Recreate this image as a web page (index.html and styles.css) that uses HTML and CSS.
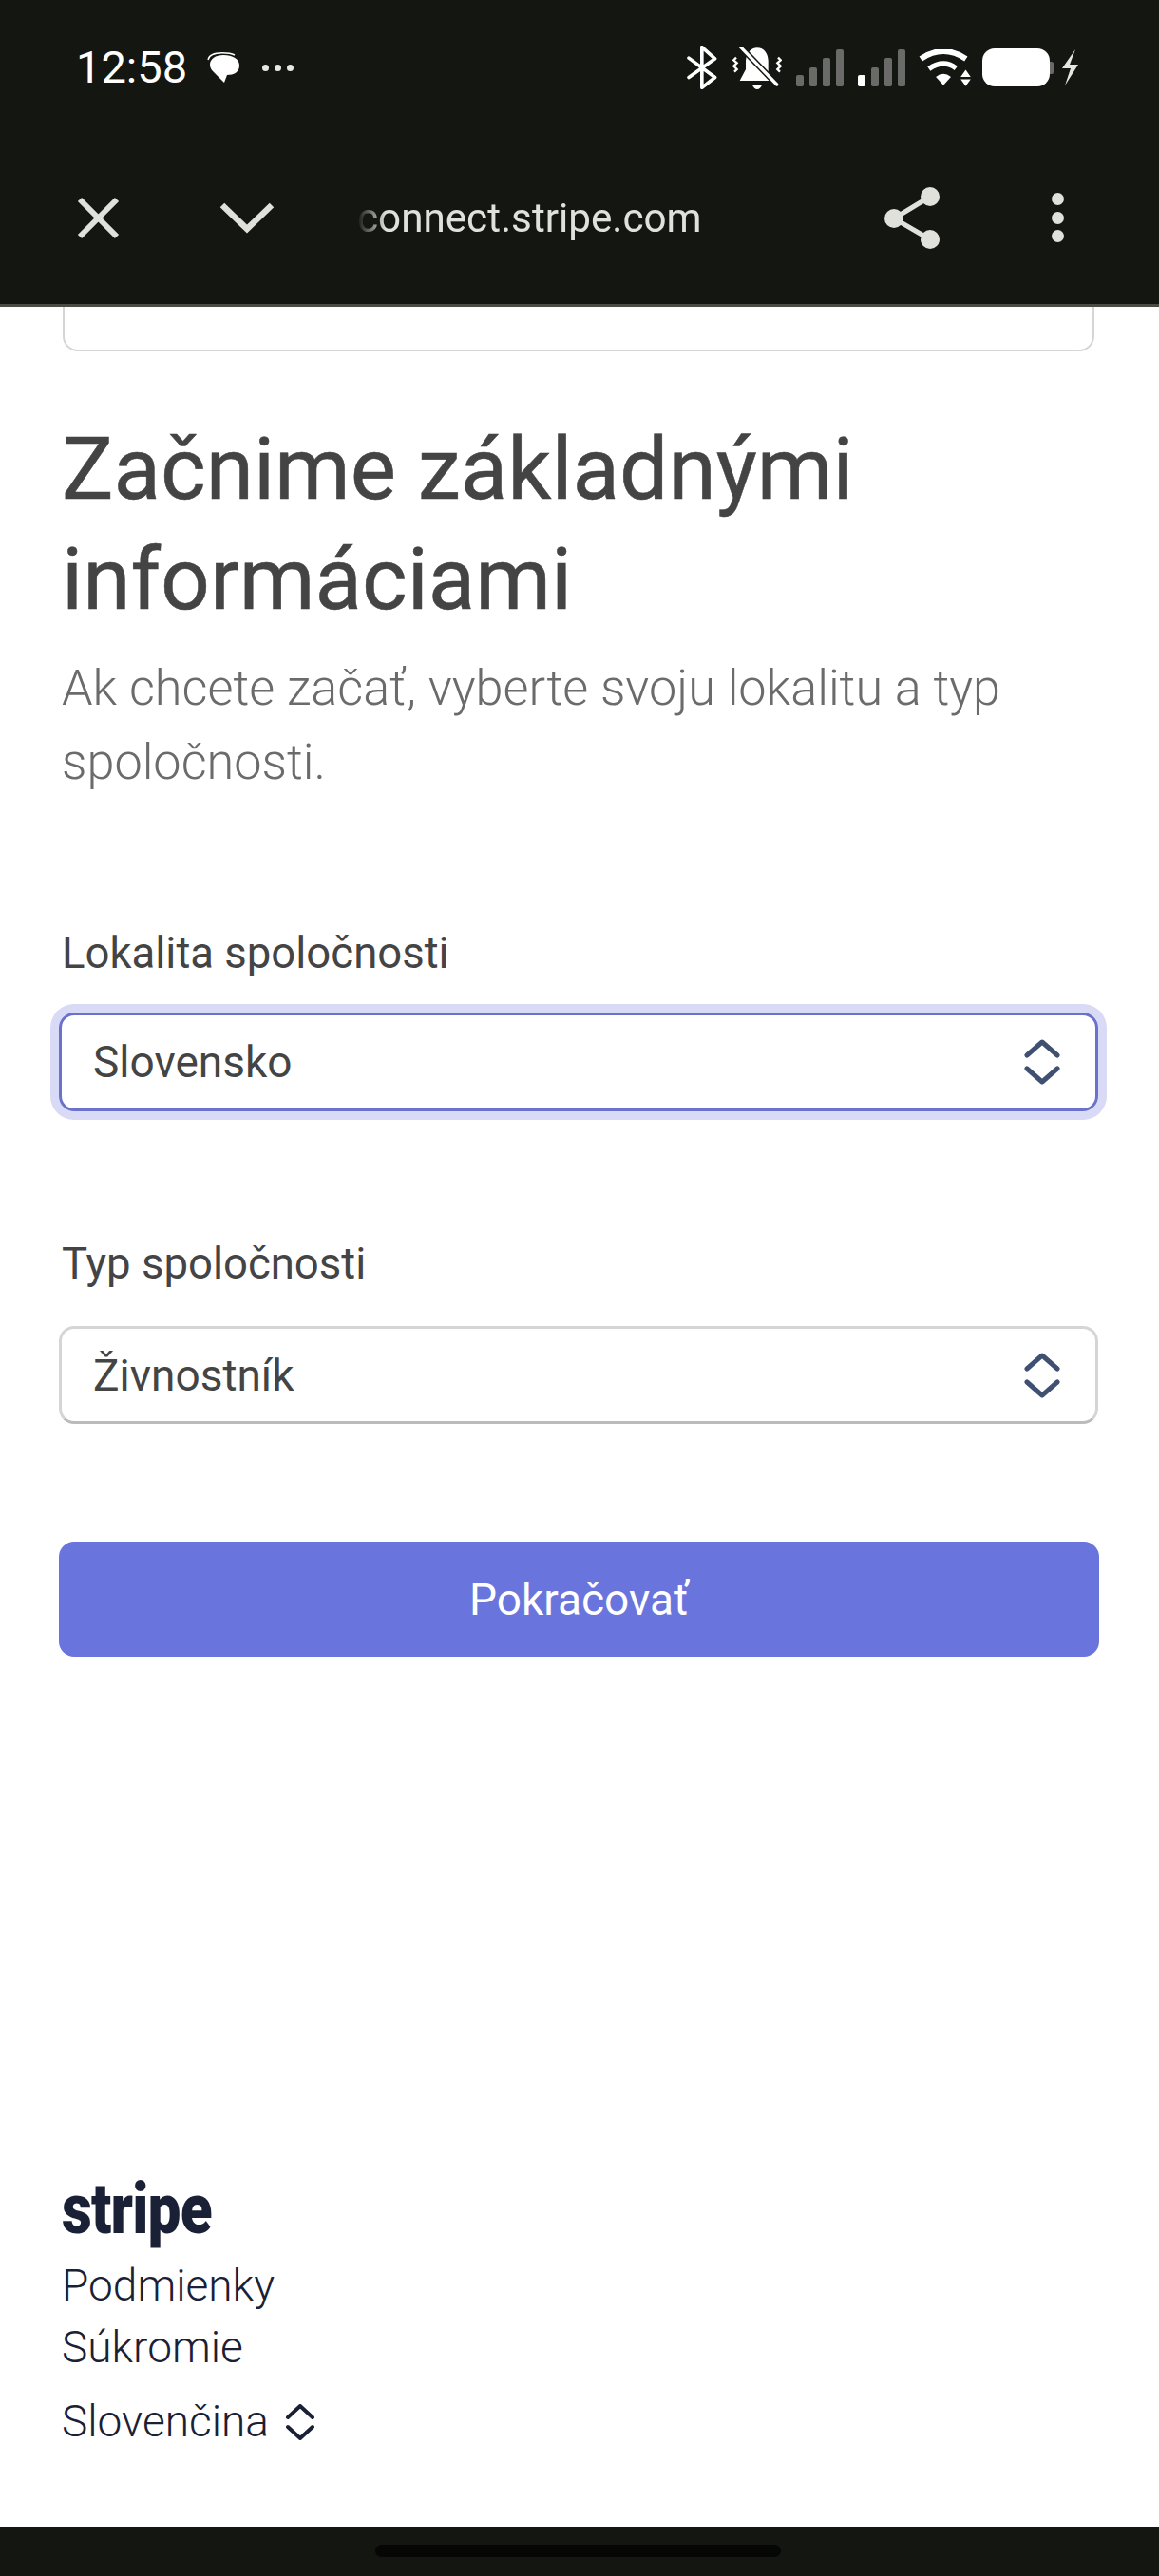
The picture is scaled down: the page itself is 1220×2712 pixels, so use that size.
FILE: index.html
```html
<!DOCTYPE html>
<html lang="sk">

<head>
    <meta charset="UTF-8">
    <meta name="viewport" content="width=device-width, initial-scale=1.0">
    <title>Stripe</title>
    <link rel="stylesheet" href="styles.css">
</head>

<body>
    <!-- telefon: stavovy riadok + lista prehliadaca -->
    <header class="top">
        <div class="status">
            <div class="status-left">
                <span class="time">12:58</span>
                <svg class="ic-chat" viewBox="0 0 34 32">
                    <path d="M1 8 C2 3 8 .8 16 .8 C22 .8 26 1.5 29 3" fill="none" stroke="#fff" stroke-width="1.4" />
                    <path d="M17 3 C27 3 34 7 34 14 C34 21 28 24 21 24 L18 32 L7 21 C4 18 3 16 3 13 C3 7 9 3 17 3 Z" fill="#fff" />
                </svg>
                <div class="dots"><i></i><i></i><i></i></div>
            </div>
            <div class="status-right">
                <svg class="ic-bt" viewBox="0 0 97 140">
                    <path d="M6 40 L90 102 L48 135 L48 5 L90 42 L6 102" fill="none" stroke="#fff" stroke-width="11" stroke-linecap="round" stroke-linejoin="round" />
                </svg>
                <svg class="ic-bell" viewBox="0 0 156 135">
                    <path d="M78 4 C100 4 112 22 113 45 L113 90 L122 108 L23 108 L42 72 L42 45 C44 20 58 4 78 4 Z" fill="#fff" />
                    <path d="M26 2 L140 120" stroke="#141612" stroke-width="19" />
                    <path d="M26 2 L140 120" stroke="#fff" stroke-width="10" stroke-linecap="round" />
                    <path d="M12 35 L4 43 L14 52 L4 62 L14 72 L6 80 M144 35 L152 43 L142 52 L152 62 L142 72 L150 80" fill="none" stroke="#fff" stroke-width="7" />
                    <path d="M62 120 H94 Q88 135 78 135 Q68 135 62 120 Z" fill="#fff" />
                </svg>
                <div class="signal">
                    <i class="b1"></i><i class="b2"></i><i class="b3"></i><i class="b4"></i>
                </div>
                <div class="signal">
                    <i class="b1 on"></i><i class="b2"></i><i class="b3"></i><i class="b4"></i>
                </div>
                <svg class="ic-wifi" viewBox="0 0 168 118">
                    <path d="M6 30 Q78 -18 150 30" fill="none" stroke="#fff" stroke-width="18" />
                    <path d="M32 62 Q78 30 118 60" fill="none" stroke="#fff" stroke-width="16" />
                    <path d="M54 88 Q78 68 102 88 L78 114 Z" fill="#fff" />
                    <path d="M149 65 L165 88 H133 Z M133 95 H165 L149 117 Z" fill="#fff" />
                </svg>
                <div class="battery"><span class="batt-body"></span><span class="batt-tip"></span></div>
                <svg class="ic-bolt" viewBox="0 0 19 38">
                    <path d="M15 0 L1 20 L10 20 L4 38 L18 16 L9 16 Z" fill="#e6e6e2" />
                </svg>
            </div>
        </div>
        <div class="browser">
            <svg class="ic-close" viewBox="0 0 45 45">
                <path d="M3 3 L42 42 M42 3 L3 42" stroke="#e0e1db" stroke-width="6" />
            </svg>
            <svg class="ic-down" viewBox="0 0 58 34">
                <path d="M3 4 L29 29 L55 4" fill="none" stroke="#e0e1db" stroke-width="6.5" />
            </svg>
            <div class="url"><span>connect.stripe.com</span></div>
            <svg class="ic-share" viewBox="0 0 58 65">
                <path d="M48 10 L10 33 L48 55" fill="none" stroke="#e0e1db" stroke-width="5" />
                <circle cx="48" cy="10" r="10" fill="#e0e1db" />
                <circle cx="10" cy="33" r="10" fill="#e0e1db" />
                <circle cx="48" cy="55" r="10" fill="#e0e1db" />
            </svg>
            <div class="menu"><i></i><i></i><i></i></div>
        </div>
    </header>

    <main class="page">
        <div class="stub"></div>

        <h1>Začnime základnými informáciami</h1>
        <p class="lead">Ak chcete začať, vyberte svoju lokalitu a typ spoločnosti.</p>

        <div class="field field-first">
            <label>Lokalita spoločnosti</label>
            <div class="select focus">
                <span>Slovensko</span>
                <svg class="updown" viewBox="0 0 38 48">
                    <path d="M3 17 L19 3 L35 17 M3 31 L19 45 L35 31" fill="none" stroke="#3f5070" stroke-width="5" stroke-linecap="round" stroke-linejoin="round" />
                </svg>
            </div>
        </div>

        <div class="field field-second">
            <label>Typ spoločnosti</label>
            <div class="select plain">
                <span>Živnostník</span>
                <svg class="updown" viewBox="0 0 38 48">
                    <path d="M3 17 L19 3 L35 17 M3 31 L19 45 L35 31" fill="none" stroke="#3f5070" stroke-width="5" stroke-linecap="round" stroke-linejoin="round" />
                </svg>
            </div>
        </div>

        <button type="button" class="next">Pokračovať</button>

        <footer class="foot">
            <div class="logo">stripe</div>
            <a href="#">Podmienky</a>
            <a href="#">Súkromie</a>
            <a href="#" class="lang">Slovenčina
                <svg class="updown-small" viewBox="0 0 30 38">
                    <path d="M2 14 L15 2 L28 14 M2 24 L15 36 L28 24" fill="none" stroke="#1a2035" stroke-width="4" stroke-linecap="round" stroke-linejoin="round" />
                </svg>
            </a>
        </footer>
    </main>

    <div class="navbar"><span class="pill"></span></div>
</body>

</html>
```

FILE: styles.css
```css
* {
    margin: 0;
    padding: 0;
    box-sizing: border-box;
}

body {
    width: 1220px;
    height: 2712px;
    display: flex;
    flex-direction: column;
    font-family: Roboto, 'Liberation Sans', sans-serif;
    color: #444;
    background: #fff;
    overflow: hidden;
}

a {
    color: #1a2035;
    text-decoration: none;
}

/* top bars */
.top {
    height: 323px;
    background: #141612;
    border-bottom: 3px solid #4b4c44;
    flex: none;
}

.status {
    height: 142px;
    display: flex;
    justify-content: space-between;
    align-items: center;
    padding: 0 84px 0 80px;
}

.status-left,
.status-right {
    display: flex;
    align-items: center;
}

.time {
    color: #fff;
    font-size: 47px;
    line-height: 50px;
}

.ic-chat {
    width: 34px;
    height: 32px;
    margin-left: 21px;
}

.dots {
    display: flex;
    gap: 6px;
    margin-left: 24px;
}

.dots i {
    width: 7px;
    height: 7px;
    border-radius: 50%;
    background: #e8e8e4;
}

.ic-bt {
    width: 32px;
    height: 46px;
}

.ic-bell {
    width: 52px;
    height: 45px;
    margin-left: 16px;
}

.signal {
    height: 39px;
    display: flex;
    align-items: flex-end;
    gap: 6px;
    margin-left: 15px;
}

.signal i {
    width: 8px;
    background: #6a6b68;
    border-radius: 2px;
}

.signal i.on {
    background: #fff;
}

.b1 {
    height: 12px;
}

.b2 {
    height: 20px;
}

.b3 {
    height: 30px;
}

.b4 {
    height: 39px;
}

.ic-wifi {
    width: 56px;
    height: 39px;
    margin-left: 14px;
}

.battery {
    display: flex;
    align-items: center;
    margin-left: 11px;
}

.batt-body {
    width: 71px;
    height: 40px;
    background: #fff;
    border-radius: 13px;
}

.batt-tip {
    width: 4px;
    height: 13px;
    background: #6a6b68;
    border-radius: 0 2px 2px 0;
}

.ic-bolt {
    width: 19px;
    height: 38px;
    margin-left: 8px;
}

.browser {
    height: 178px;
    display: flex;
    align-items: center;
    padding: 0 0 4px 81px;
}

.ic-close {
    width: 45px;
    height: 45px;
}

.ic-down {
    width: 58px;
    height: 34px;
    margin-left: 105px;
}

.url {
    width: 380px;
    margin-left: 87px;
    overflow: hidden;
    white-space: nowrap;
    font-size: 42.2px;
    color: #e0e1db;
    -webkit-mask-image: linear-gradient(90deg, transparent 0, #000 30px);
    mask-image: linear-gradient(90deg, transparent 0, #000 30px);
}

.ic-share {
    width: 58px;
    height: 65px;
    margin-left: 175px;
}

.menu {
    display: flex;
    flex-direction: column;
    gap: 6.5px;
    margin-left: 118px;
}

.menu i {
    width: 13px;
    height: 13px;
    border-radius: 50%;
    background: #e0e1db;
}

/* form */
.page {
    flex: 1;
    display: flex;
    flex-direction: column;
    padding: 0 62px;
    min-height: 0;
}

.stub {
    height: 47px;
    margin: 0 6px 0 4px;
    border: 2px solid #d5d5d5;
    border-top: none;
    border-radius: 0 0 16px 16px;
}

h1 {
    font-size: 91px;
    font-weight: 400;
    line-height: 116px;
    color: #444;
    margin: 66px 0 0 3px;
    -webkit-text-stroke: 0.5px #444;
}

.lead {
    font-size: 52.2px;
    font-weight: 300;
    line-height: 78px;
    color: #6b6b6b;
    margin: 18px 0 0 3px;
}

.field {
    margin-top: 136px;
}

.field-first {
    margin-top: 137px;
}

label {
    display: block;
    font-size: 45.5px;
    line-height: 50px;
    color: #444;
    margin: 0 0 37px 3px;
}

.field-second label {
    margin-bottom: 40px;
}

.select {
    height: 104px;
    display: flex;
    align-items: center;
    justify-content: space-between;
    padding: 0 37px 0 33px;
    border: 3px solid #d5d5d5;
    border-bottom-color: #bbb;
    border-radius: 16px;
    font-size: 46px;
    color: #444;
    margin-right: 2px;
}

.select.focus {
    border-color: #6a72cc;
    box-shadow: 0 0 0 9px #d9daf5;
}

.select.plain {
    height: 103px;
}

.updown {
    width: 38px;
    height: 48px;
}

.next {
    height: 121px;
    margin: 124px 1px 0 0;
    border: none;
    border-radius: 16px;
    background: #6a74dd;
    color: #fff;
    font-family: inherit;
    font-size: 46px;
}

.foot {
    margin-top: auto;
    padding: 0 0 78px 3px;
    display: flex;
    flex-direction: column;
    align-items: flex-start;
}

.logo {
    font-weight: 900;
    font-size: 74px;
    line-height: 66px;
    letter-spacing: -1px;
    color: #1a2035;
    margin-bottom: 15px;
    transform: scaleX(.84);
    transform-origin: left center;
}

.foot a {
    font-size: 46px;
    line-height: 65px;
    font-weight: 300;
}

.foot a.lang {
    display: flex;
    align-items: center;
    gap: 18px;
    margin-top: 13px;
}

.updown-small {
    width: 30px;
    height: 38px;
}

.navbar {
    height: 52px;
    flex: none;
    background: #141612;
    display: flex;
    justify-content: center;
    padding: 19px 4px 0 0;
}

.pill {
    width: 427px;
    height: 13px;
    border-radius: 7px;
    background: #060604;
}
```
